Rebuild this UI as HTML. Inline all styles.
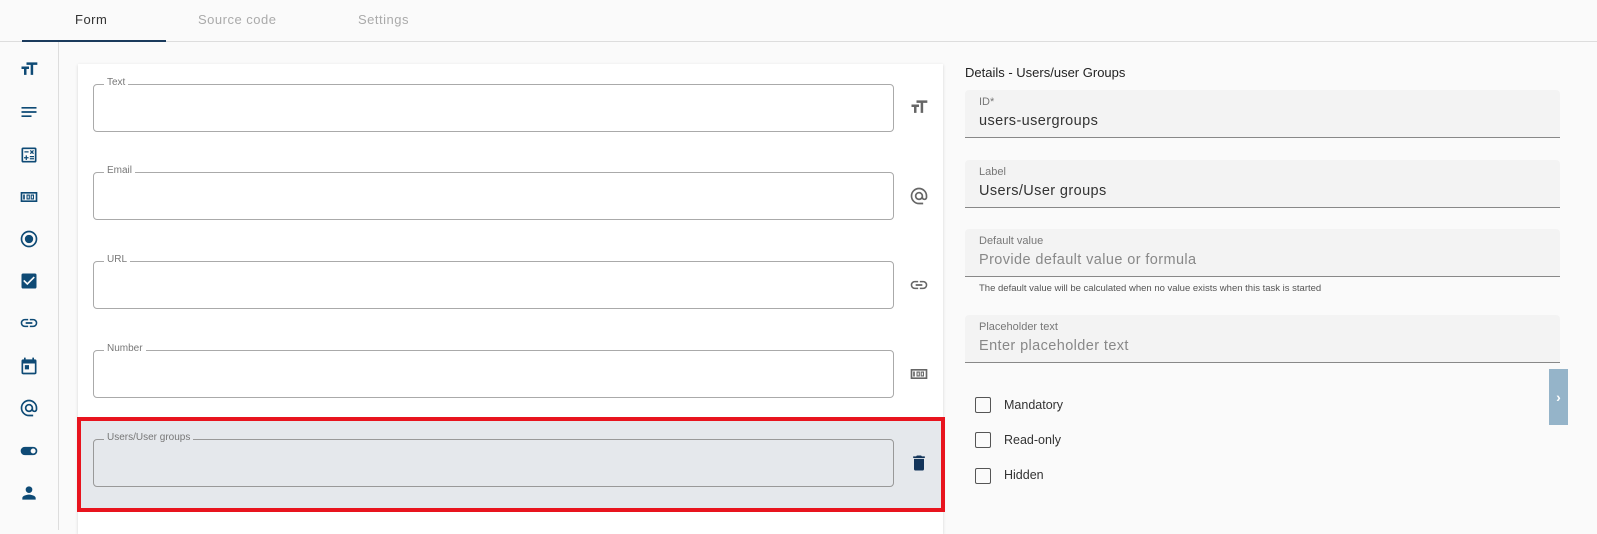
<!DOCTYPE html>
<html><head><meta charset="utf-8"><style>
*{box-sizing:border-box;margin:0;padding:0}
body{width:1597px;height:530px;overflow:hidden;background:#fafafa;font-family:"Liberation Sans",sans-serif;position:relative;color:#333}
.abs{position:absolute}
.tab{position:absolute;top:12px;font-size:13px;letter-spacing:.5px}
.side svg{position:absolute;left:19px;width:20px;height:20px;fill:#0e4a75}
.fld{position:absolute;left:93px;width:801px;height:48px;border:1px solid #aaa;border-radius:4px}
.fld span{position:absolute;top:-8px;left:10px;background:#fff;padding:0 3px;font-size:10px;color:#777}
.ic{position:absolute;left:909px;width:20px;height:20px;fill:#666}
.rf{position:absolute;left:965px;width:595px;height:48px;background:#f3f3f3;border-bottom:1px solid #888;border-radius:4px 4px 0 0}
.rf .l{position:absolute;left:14px;top:6px;font-size:11px;color:#777}
.rf .v{position:absolute;left:14px;top:23px;font-size:14.5px;color:#333;letter-spacing:.4px}
.rf .p{color:#888}
.cb{position:absolute;left:975px;width:16px;height:16px;border:1.5px solid #555;border-radius:2px}
.cl{position:absolute;left:1004px;font-size:12.5px;color:#333}
</style></head><body>
<div class="tab" style="left:75px;color:#333">Form</div>
<div class="tab" style="left:198px;color:#aaa">Source code</div>
<div class="tab" style="left:358px;color:#aaa">Settings</div>
<div class="abs" style="left:0;top:41px;width:1597px;height:1px;background:#ddd"></div>
<div class="abs" style="left:22px;top:40px;width:144px;height:2px;background:#1a3a5c"></div>
<div class="abs" style="left:58px;top:42px;width:1px;height:488px;background:#ddd"></div>
<div class="side">
<svg style="top:59px" viewBox="0 0 24 24"><path d="M9 4v3h5v12h3V7h5V4H9zm-6 8h3v7h3v-7h3V9H3v3z"/></svg>
<svg style="top:102px" viewBox="0 0 24 24"><path d="M3 6h18v2H3zm0 5h18v2H3zm0 5h12v2H3z"/></svg>
<svg style="top:145px" viewBox="0 0 24 24"><path d="M19 3H5a2 2 0 0 0-2 2v14a2 2 0 0 0 2 2h14a2 2 0 0 0 2-2V5a2 2 0 0 0-2-2zm0 16H5V5h14v14zM6.5 7.5h5V9h-5zM13 15.75h5v1.5h-5zm0-2.5h5v1.5h-5zM8 18h1.5v-2h2v-1.5h-2v-2H8v2H6V16h2zm6.09-7.05 1.41-1.41 1.41 1.41 1.06-1.06-1.41-1.42 1.41-1.41L16.91 6 15.5 7.41 14.09 6l-1.06 1.06 1.41 1.41-1.41 1.42z"/></svg>
<svg style="top:187px" viewBox="0 0 24 24"><path d="M2 6h20v12H2zm2 2v8h16V8zm1 1h2v6H5zm4 0h4v6H9zm1.3 1.3v3.4h1.4v-3.4zM14 9h4v6h-4zm1.3 1.3v3.4h1.4v-3.4z" fill-rule="evenodd"/></svg>
<svg style="top:229px" viewBox="0 0 24 24"><path d="M12 7a5 5 0 1 0 0 10 5 5 0 0 0 0-10zm0-5a10 10 0 1 0 0 20 10 10 0 0 0 0-20zm0 18a8 8 0 1 1 0-16 8 8 0 0 1 0 16z"/></svg>
<svg style="top:271px" viewBox="0 0 24 24"><path d="M19 3H5a2 2 0 0 0-2 2v14a2 2 0 0 0 2 2h14a2 2 0 0 0 2-2V5a2 2 0 0 0-2-2zm-9 14-5-5 1.41-1.41L10 14.17l7.59-7.59L19 8l-9 9z"/></svg>
<svg style="top:313px" viewBox="0 0 24 24"><path d="M3.9 12c0-1.71 1.39-3.1 3.1-3.1h4V7H7a5 5 0 0 0 0 10h4v-1.9H7c-1.71 0-3.1-1.39-3.1-3.1zM8 13h8v-2H8v2zm9-6h-4v1.9h4c1.71 0 3.1 1.39 3.1 3.1s-1.39 3.1-3.1 3.1h-4V17h4a5 5 0 0 0 0-10z"/></svg>
<svg style="top:356px" viewBox="0 0 24 24"><path d="M19 4h-1V2h-2v2H8V2H6v2H5a2 2 0 0 0-2 2v14a2 2 0 0 0 2 2h14a2 2 0 0 0 2-2V6a2 2 0 0 0-2-2zm0 16H5V9h14v11zM7 11h5v5H7z"/></svg>
<svg style="top:398px" viewBox="0 0 24 24"><path d="M12 2a10 10 0 0 0 0 20h5v-2h-5a8 8 0 1 1 8-8v1.43c0 .79-.71 1.57-1.5 1.57s-1.5-.78-1.5-1.57V12a5 5 0 1 0-1.46 3.53A3.7 3.7 0 0 0 18.5 17c1.97 0 3.5-1.6 3.5-3.57V12A10 10 0 0 0 12 2zm0 13a3 3 0 1 1 0-6 3 3 0 0 1 0 6z"/></svg>
<svg style="top:441px" viewBox="0 0 24 24"><path d="M17 7H7a5 5 0 0 0 0 10h10a5 5 0 0 0 0-10zm0 8a3 3 0 1 1 0-6 3 3 0 0 1 0 6z"/></svg>
<svg style="top:483px" viewBox="0 0 24 24"><path d="M12 12a4 4 0 1 0 0-8 4 4 0 0 0 0 8zm0 2c-2.67 0-8 1.34-8 4v2h16v-2c0-2.66-5.33-4-8-4z"/></svg>
</div>
<div class="abs" style="left:78px;top:64px;width:865px;height:470px;background:#fff;box-shadow:0 1px 3px rgba(0,0,0,.15)"></div>
<div class="fld" style="top:84px"><span>Text</span></div>
<div class="fld" style="top:172px"><span>Email</span></div>
<div class="fld" style="top:261px"><span>URL</span></div>
<div class="fld" style="top:350px"><span>Number</span></div>
<div class="abs" style="left:77px;top:417px;width:868px;height:95px;background:#e5e8ec;border:4px solid #e8141e"></div>
<div class="fld" style="top:439px;border-color:#999"><span style="background:#e5e8ec">Users/User groups</span></div>
<svg class="ic" style="top:97px" viewBox="0 0 24 24"><path d="M9 4v3h5v12h3V7h5V4H9zm-6 8h3v7h3v-7h3V9H3v3z"/></svg>
<svg class="ic" style="top:186px" viewBox="0 0 24 24"><path d="M12 2a10 10 0 0 0 0 20h5v-2h-5a8 8 0 1 1 8-8v1.43c0 .79-.71 1.57-1.5 1.57s-1.5-.78-1.5-1.57V12a5 5 0 1 0-1.46 3.53A3.7 3.7 0 0 0 18.5 17c1.97 0 3.5-1.6 3.5-3.57V12A10 10 0 0 0 12 2zm0 13a3 3 0 1 1 0-6 3 3 0 0 1 0 6z"/></svg>
<svg class="ic" style="top:275px" viewBox="0 0 24 24"><path d="M3.9 12c0-1.71 1.39-3.1 3.1-3.1h4V7H7a5 5 0 0 0 0 10h4v-1.9H7c-1.71 0-3.1-1.39-3.1-3.1zM8 13h8v-2H8v2zm9-6h-4v1.9h4c1.71 0 3.1 1.39 3.1 3.1s-1.39 3.1-3.1 3.1h-4V17h4a5 5 0 0 0 0-10z"/></svg>
<svg class="ic" style="top:364px" viewBox="0 0 24 24"><path d="M2 6h20v12H2zm2 2v8h16V8zm1 1h2v6H5zm4 0h4v6H9zm1.3 1.3v3.4h1.4v-3.4zM14 9h4v6h-4zm1.3 1.3v3.4h1.4v-3.4z" fill-rule="evenodd"/></svg>
<svg class="ic" style="top:453px;fill:#13345a" viewBox="0 0 24 24"><path d="M6 19a2 2 0 0 0 2 2h8a2 2 0 0 0 2-2V7H6v12zM19 4h-3.5l-1-1h-5l-1 1H5v2h14V4z"/></svg>
<div class="abs" style="left:965px;top:65px;font-size:13px;color:#222">Details - Users/user Groups</div>
<div class="rf" style="top:90px"><div class="l">ID*</div><div class="v">users-usergroups</div></div>
<div class="rf" style="top:160px"><div class="l">Label</div><div class="v">Users/User groups</div></div>
<div class="rf" style="top:229px"><div class="l">Default value</div><div class="v p">Provide default value or formula</div></div>
<div class="abs" style="left:979px;top:283px;font-size:9.5px;color:#555">The default value will be calculated when no value exists when this task is started</div>
<div class="rf" style="top:315px"><div class="l">Placeholder text</div><div class="v p">Enter placeholder text</div></div>
<div class="cb" style="top:397px"></div><div class="cl" style="top:398px">Mandatory</div>
<div class="cb" style="top:432px"></div><div class="cl" style="top:433px">Read-only</div>
<div class="cb" style="top:468px"></div><div class="cl" style="top:468px">Hidden</div>
<div class="abs" style="left:1549px;top:369px;width:19px;height:56px;background:#95b4c9;color:#fff;font-size:14px;font-weight:bold;line-height:56px;text-align:center">›</div>
</body></html>
